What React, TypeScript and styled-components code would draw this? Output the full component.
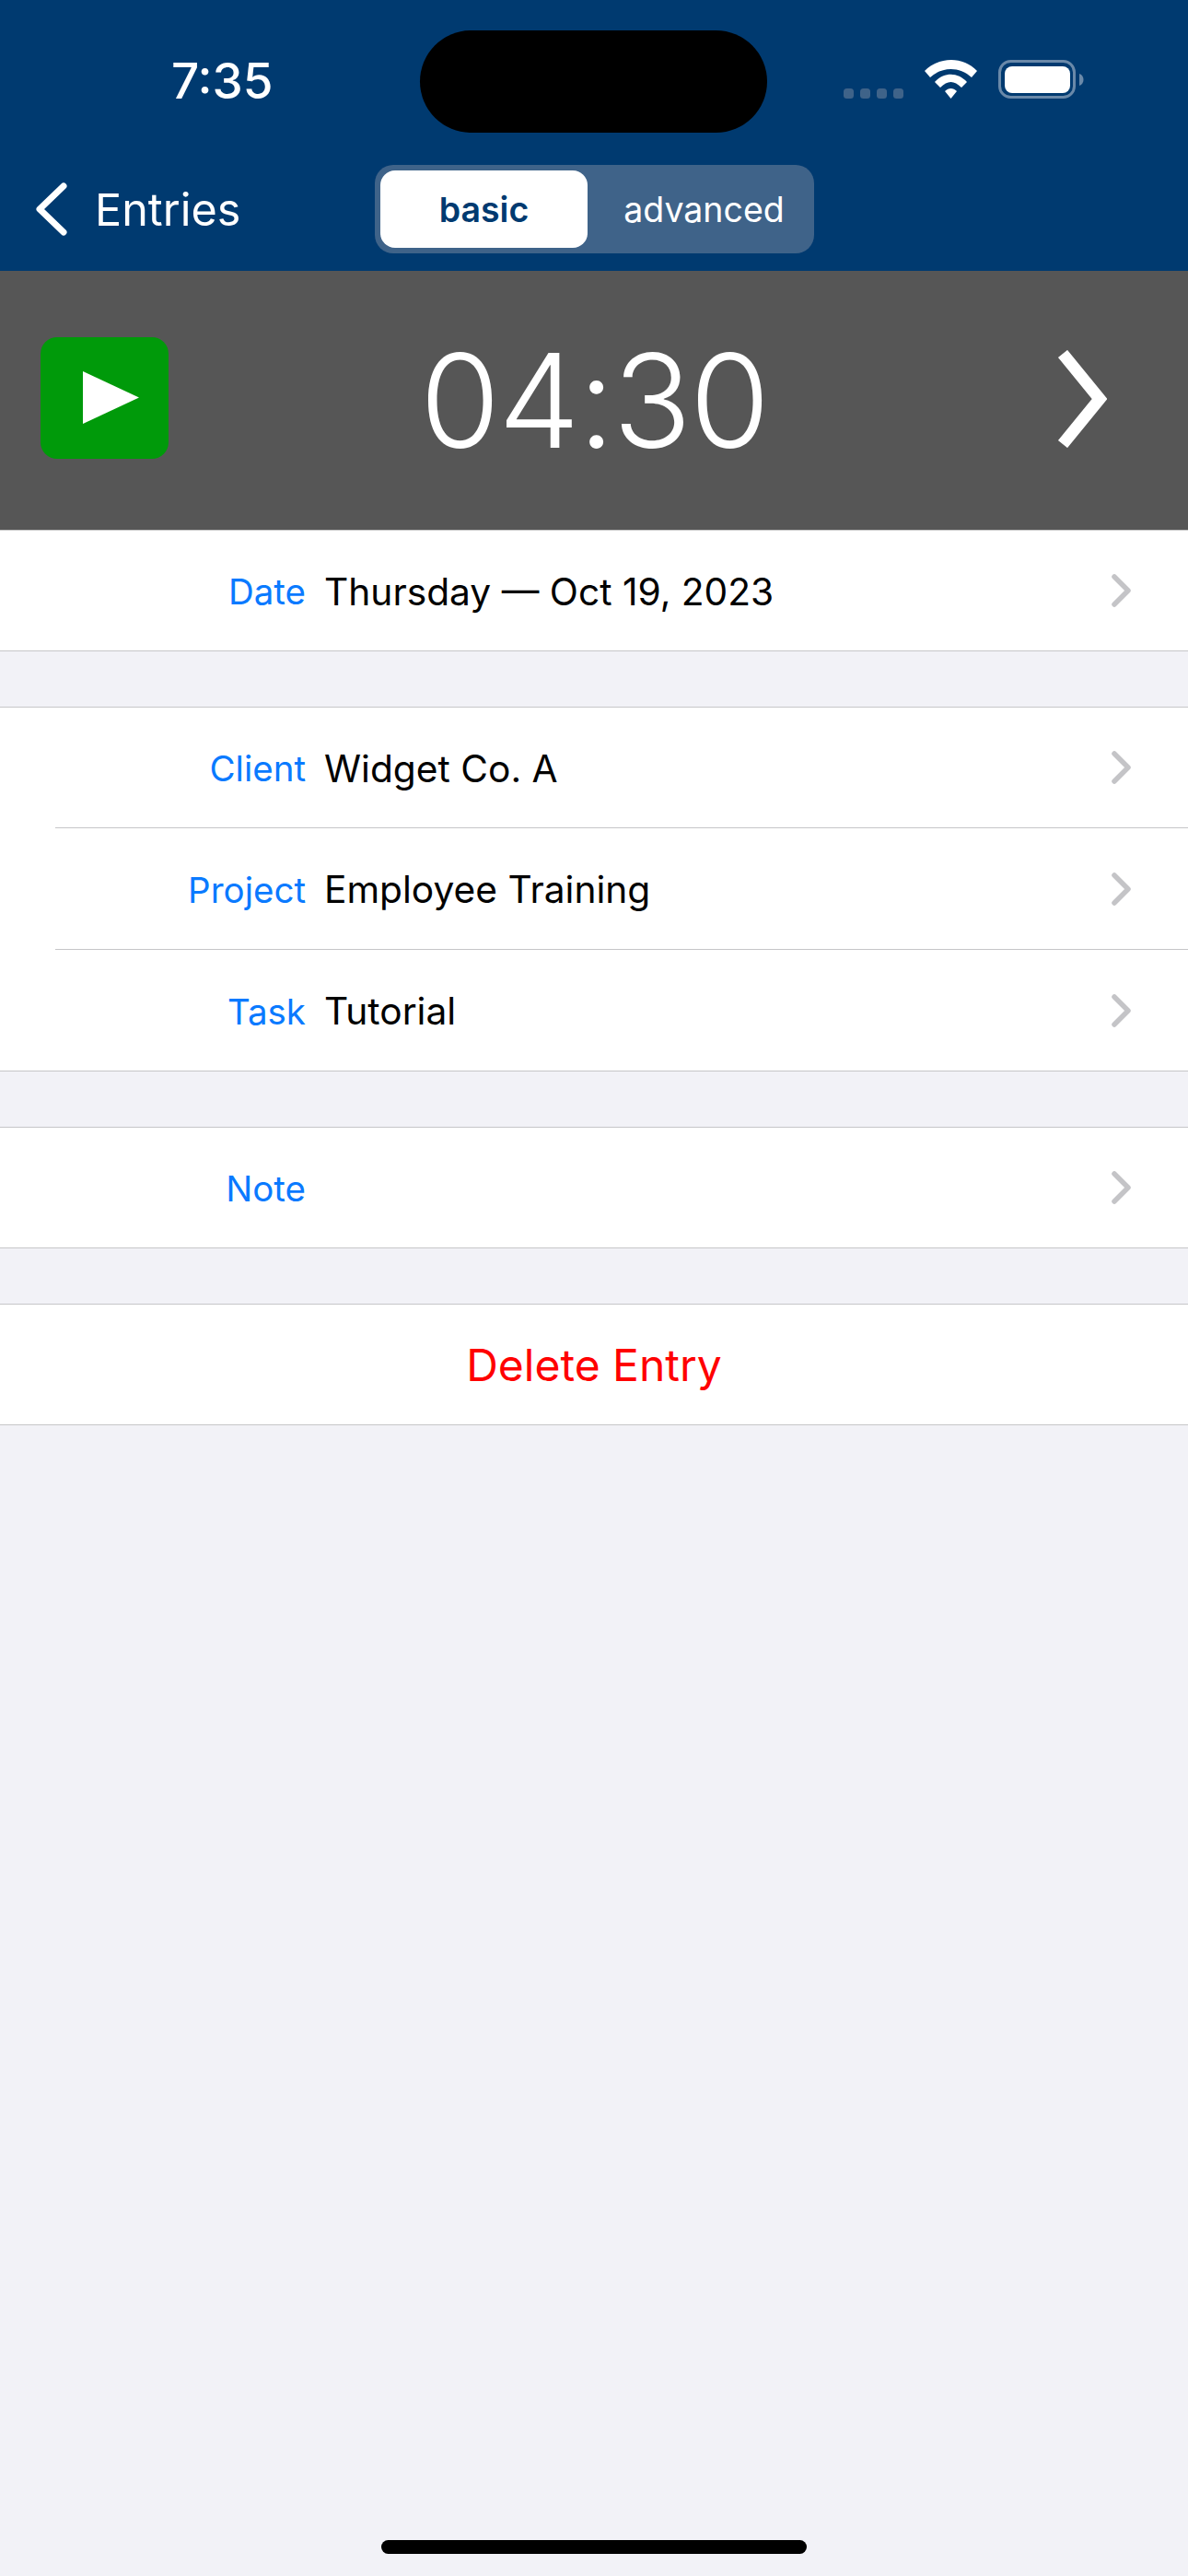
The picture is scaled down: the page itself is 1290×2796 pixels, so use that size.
import React from 'react';
import styled, {createGlobalStyle} from 'styled-components';

const GlobalStyle = createGlobalStyle`
	html, body {
		margin: 0;
		padding: 0;
		background: #f2f2f7;
		font-family: Inter, "Liberation Sans", sans-serif;
	}
`;

const Screen = styled.div`
	position: relative;
	width: 1290px;
	height: 2796px;
	overflow: hidden;
	background: #f2f2f7;
`;

const Header = styled.header`
	height: 294px;
	box-sizing: border-box;
	background: #003a70;
	color: #fff;
`;

const StatusBar = styled.div`
	display: flex;
	justify-content: space-between;
	align-items: flex-start;
	height: 179px;
	padding: 0 112px 0 186px;
	box-sizing: border-box;
`;

const Clock = styled.span`
	margin-top: 56px;
	font-size: 53px;
	line-height: 64px;
	font-weight: 500;
`;

const StatusIcons = styled.div`
	display: flex;
	margin-top: 64px;
`;

const Island = styled.div`
	position: absolute;
	left: 456px;
	top: 33px;
	width: 377px;
	height: 111px;
	border-radius: 56px;
	background: #000;
`;

const NavBar = styled.nav`
	display: flex;
	align-items: center;
	height: 96px;
`;

const BackLink = styled.div`
	display: flex;
	align-items: center;
	gap: 29px;
	width: 407px;
	padding-left: 38px;
	box-sizing: border-box;
	font-size: 48.5px;
`;

const Segments = styled.div`
	display: flex;
	width: 477px;
	height: 96px;
	padding: 6px;
	box-sizing: border-box;
	border-radius: 20px;
	background: #3f6389;
`;

const Segment = styled.div<{$active?: boolean}>`
	display: flex;
	align-items: center;
	justify-content: center;
	flex: ${(p) => (p.$active ? '0 0 225px' : '1')};
	padding-left: ${(p) => (p.$active ? 0 : 13)}px;
	border-radius: 16px;
	font-size: 37.5px;
	font-weight: ${(p) => (p.$active ? 600 : 400)};
	background: ${(p) => (p.$active ? '#fff' : 'transparent')};
	color: ${(p) => (p.$active ? '#003a70' : '#fff')};
`;

const TimerBar = styled.section`
	position: relative;
	display: flex;
	align-items: center;
	justify-content: space-between;
	height: 282px;
	padding: 0 88px 0 44px;
	box-sizing: border-box;
	background: #565656;
	border-bottom: 1px solid #c8c8c8;
`;

const PlayButton = styled.div`
	display: flex;
	align-items: center;
	justify-content: center;
	width: 139px;
	height: 132px;
	margin-bottom: 6px;
	border-radius: 18px;
	background: #009a0a;
`;

const PlayGlyph = styled.svg`
	width: 61px;
	height: 57px;
	margin-left: 14px;
`;

const NextGlyph = styled.svg`
	width: 54px;
	height: 106px;
	margin-bottom: 3px;
`;

const Time = styled.div`
	position: absolute;
	left: 0;
	right: 0;
	text-align: center;
	font-size: 141px;
	font-weight: 300;
	letter-spacing: -2px;
	color: #fff;
`;

const Group = styled.div<{$first?: boolean}>`
	margin-top: ${(p) => (p.$first ? 0 : 60)}px;
	background: #fff;
	border-bottom: 1px solid #c6c6c8;
	border-top: ${(p) => (p.$first ? 'none' : '1px solid #c6c6c8')};
`;

const Row = styled.div<{$tall?: boolean}>`
	display: flex;
	align-items: center;
	height: ${(p) => (p.$tall ? 131 : 130)}px;
	padding-top: 2px;
	box-sizing: border-box;
`;

const Divider = styled.div`
	height: 1px;
	margin-left: 60px;
	background: #c6c6c8;
`;

const Label = styled.span`
	width: 332px;
	text-align: right;
	font-size: 38.5px;
	color: #0a7aff;
`;

const Value = styled.span`
	flex: 1;
	margin-left: 20px;
	font-size: 40.7px;
	color: #000;
`;

const Disclosure = styled.svg`
	width: 21px;
	height: 36px;
	margin-right: 62px;
	margin-top: -2px;
`;

const DeleteRow = styled.div`
	display: flex;
	align-items: center;
	justify-content: center;
	height: 130px;
	font-size: 48px;
	color: #ff0000;
`;

const HomeBar = styled.div`
	position: absolute;
	left: 414px;
	top: 2757px;
	width: 462px;
	height: 15px;
	border-radius: 8px;
	background: #000;
`;

const Chevron = () => (
    <Disclosure viewBox='0 0 21 36'>
        <path d='M3 3 L18 18 L3 33' fill='none' stroke='#c4c4c7' strokeWidth='5.5' strokeLinecap='round' strokeLinejoin='round'/>
    </Disclosure>
);

const StatusGlyphs = () => (
    <svg width='262' height='46' viewBox='0 0 262 46'>
        <g fill='#3f6389'>
            <rect x='0' y='32' width='11' height='11' rx='3.5'/>
            <rect x='18' y='32' width='11' height='11' rx='3.5'/>
            <rect x='36' y='32' width='11' height='11' rx='3.5'/>
            <rect x='54' y='32' width='11' height='11' rx='3.5'/>
        </g>
        <g fill='#fff'>
            <path d='M88 13 C104 -3 130 -3 145 13 L139 20 C126 8 107 8 94 20 Z'/>
            <path d='M99 25 C109 14 124 14 134 25 L128 31 C120 23 113 23 105 31 Z'/>
            <path d='M110 35 C114 31 119 31 123 35 L116.5 43 Z'/>
        </g>
        <rect x='169.5' y='2.5' width='81' height='39' rx='12' fill='none' stroke='#6a89a9' strokeWidth='3'/>
        <rect x='175' y='8' width='71' height='29' rx='8' fill='#fff'/>
        <path d='M256 16 C262 18 262 27 256 29 Z' fill='#6a89a9'/>
    </svg>
);

const App = () => {
    return (
        <Screen>
            <GlobalStyle/>
            <Header>
                <StatusBar>
                    <Clock>7:35</Clock>
                    <StatusIcons>
                        <StatusGlyphs/>
                    </StatusIcons>
                </StatusBar>
                <Island/>
                <NavBar>
                    <BackLink>
                        <svg width='36' height='58' viewBox='0 0 36 58'>
                            <path d='M31 4 L5 29 L31 54' fill='none' stroke='#fff' strokeWidth='7' strokeLinecap='round' strokeLinejoin='round'/>
                        </svg>
                        Entries
                    </BackLink>
                    <Segments>
                        <Segment $active>basic</Segment>
                        <Segment>advanced</Segment>
                    </Segments>
                </NavBar>
            </Header>
            <TimerBar>
                <PlayButton>
                    <PlayGlyph viewBox='0 0 61 57'>
                        <path d='M0 0 L61 28.5 L0 57 Z' fill='#fff'/>
                    </PlayGlyph>
                </PlayButton>
                <Time>04:30</Time>
                <NextGlyph viewBox='0 0 54 106'>
                    <path d='M6 4 L46 53 L6 102' fill='none' stroke='#fff' strokeWidth='13'/>
                </NextGlyph>
            </TimerBar>
            <Group $first>
                <Row><Label>Date</Label><Value>Thursday — Oct 19, 2023</Value><Chevron/></Row>
            </Group>
            <Group>
                <Row><Label>Client</Label><Value>Widget Co. A</Value><Chevron/></Row>
                <Divider/>
                <Row $tall><Label>Project</Label><Value>Employee Training</Value><Chevron/></Row>
                <Divider/>
                <Row $tall><Label>Task</Label><Value>Tutorial</Value><Chevron/></Row>
            </Group>
            <Group>
                <Row><Label>Note</Label><Value/><Chevron/></Row>
            </Group>
            <Group>
                <DeleteRow>Delete Entry</DeleteRow>
            </Group>
            <HomeBar/>
        </Screen>
    );
};

export default App;
